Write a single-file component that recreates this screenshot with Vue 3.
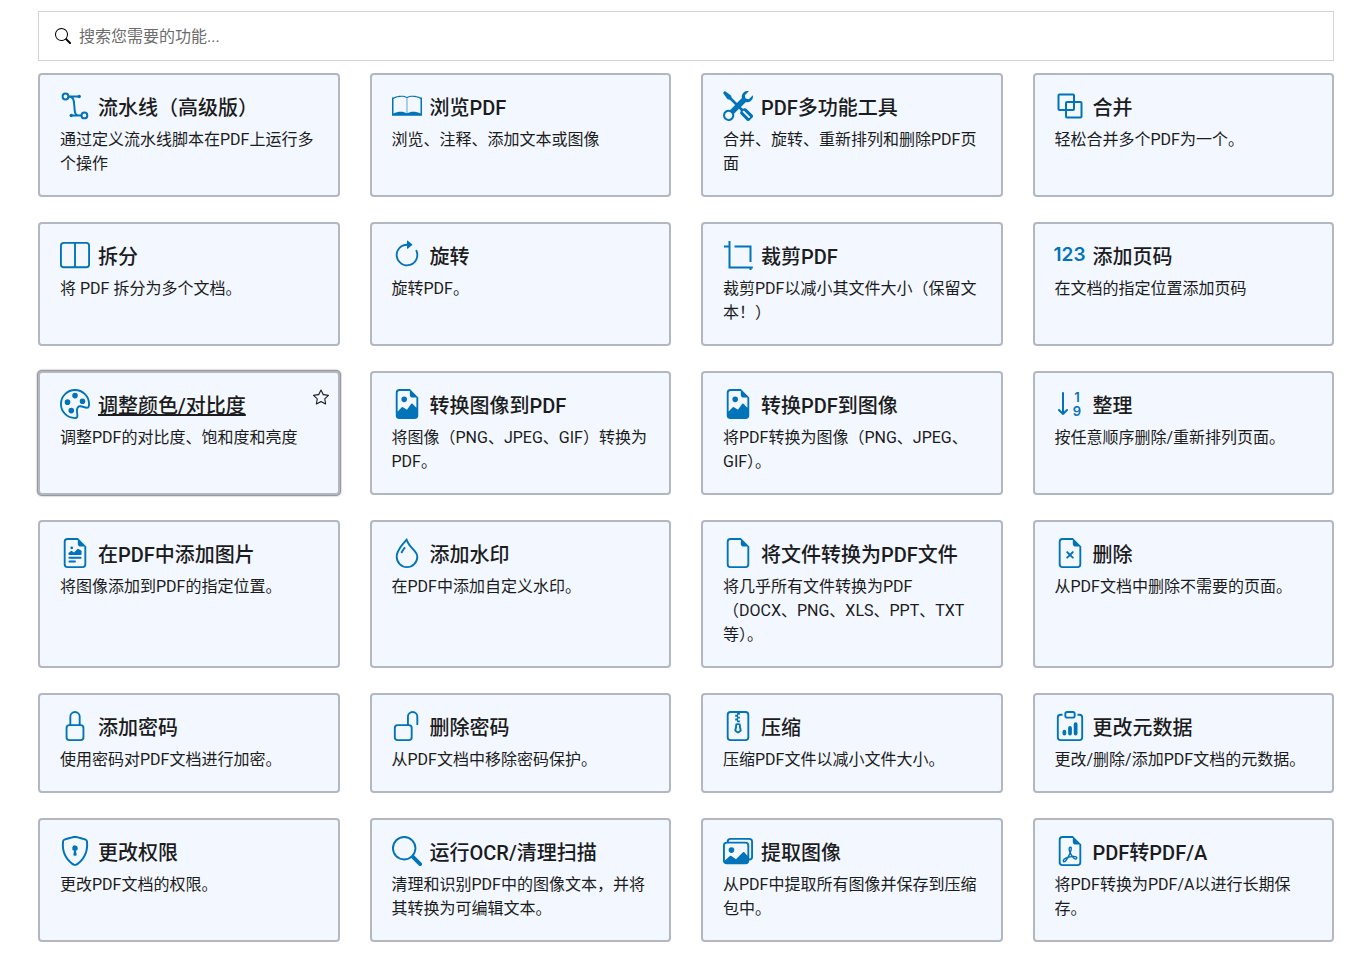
<script setup>
import { ref, computed } from 'vue'

const query = ref('')

const earmark = 'M14 4.5V14a2 2 0 0 1-2 2H4a2 2 0 0 1-2-2V2a2 2 0 0 1 2-2h5.5L14 4.5zm-3 0A1.5 1.5 0 0 1 9.5 3V1H4a1 1 0 0 0-1 1v12a1 1 0 0 0 1 1h8a1 1 0 0 0 1-1V4.5h-2z'
const searchPath = 'M11.742 10.344a6.5 6.5 0 1 0-1.397 1.398h-.001c.03.04.062.078.098.115l3.85 3.85a1 1 0 0 0 1.415-1.414l-3.85-3.85a1.007 1.007 0 0 0-.115-.1zM12 6.5a5.5 5.5 0 1 1-11 0 5.5 5.5 0 0 1 11 0z'
const starPath = 'M2.866 14.85c-.078.444.36.791.746.593l4.39-2.256 4.389 2.256c.386.198.824-.149.746-.592l-.83-4.73 3.522-3.356c.33-.314.16-.888-.282-.95l-4.898-.696L8.465.792a.513.513 0 0 0-.927 0L5.354 5.12l-4.898.696c-.441.062-.612.636-.283.95l3.523 3.356-.83 4.73zm4.905-2.767-3.686 1.894.694-3.957a.565.565 0 0 0-.163-.505L1.71 6.745l4.052-.576a.525.525 0 0 0 .393-.288L8 2.223l1.847 3.658a.525.525 0 0 0 .393.288l4.052.575-2.906 2.77a.565.565 0 0 0-.163.506l.694 3.957-3.686-1.894a.503.503 0 0 0-.461 0z'

const icons = {
  tools: ['M1 0 0 1l2.2 3.081a1 1 0 0 0 .815.419h.07a1 1 0 0 1 .708.293l2.675 2.675-2.617 2.654A3.003 3.003 0 0 0 0 13a3 3 0 1 0 5.878-.851l2.654-2.617.968.968-.305.914a1 1 0 0 0 .242 1.023l3.27 3.27a.997.997 0 0 0 1.414 0l1.586-1.586a.997.997 0 0 0 0-1.414l-3.27-3.27a1 1 0 0 0-1.023-.242L10.5 9.5l-.96-.96 2.68-2.643A3.005 3.005 0 0 0 16 3q0-.405-.102-.777l-2.14 2.141L12 4l-.364-1.757L13.777.102a3 3 0 0 0-3.675 3.68L7.462 6.46 4.793 3.793a1 1 0 0 1-.293-.707v-.071a1 1 0 0 0-.419-.814zm9.646 10.646a.5.5 0 0 1 .708 0l2.914 2.915a.5.5 0 0 1-.707.707l-2.915-2.914a.5.5 0 0 1 0-.708M3 11l.471.242.529.026.287.445.445.287.026.529L5 13l-.242.471-.026.529-.445.287-.287.445-.529.026L3 15l-.471-.242L2 14.732l-.287-.445L1.268 14l-.026-.529L1 13l.242-.471.026-.529.445-.287.287-.445.529-.026z'],
  split: ['M0 3a2 2 0 0 1 2-2h12a2 2 0 0 1 2 2v10a2 2 0 0 1-2 2H2a2 2 0 0 1-2-2V3zm8.5-1v12H14a1 1 0 0 0 1-1V3a1 1 0 0 0-1-1H8.5zm-1 0H2a1 1 0 0 0-1 1v10a1 1 0 0 0 1 1h5.5V2z'],
  rotate: ['M8 3a5 5 0 1 0 4.546 2.914.5.5 0 0 1 .908-.417A6 6 0 1 1 8 2v1z', 'M8 4.466V.534a.25.25 0 0 1 .41-.192l2.36 1.966c.12.1.12.284 0 .384L8.41 4.658A.25.25 0 0 1 8 4.466z'],
  palette: ['M8 5a1.5 1.5 0 1 0 0-3 1.5 1.5 0 0 0 0 3zm4 3a1.5 1.5 0 1 0 0-3 1.5 1.5 0 0 0 0 3zM5.5 7a1.5 1.5 0 1 1-3 0 1.5 1.5 0 0 1 3 0zm.5 6a1.5 1.5 0 1 0 0-3 1.5 1.5 0 0 0 0 3z', 'M16 8c0 3.15-1.866 2.585-3.567 2.07C11.42 9.763 10.465 9.473 10 10c-.603.683-.475 1.819-.351 2.92C9.826 14.495 9.996 16 8 16a8 8 0 1 1 8-8zm-8 7c.611 0 .654-.171.655-.176.078-.146.124-.464.07-1.119-.014-.168-.037-.37-.061-.591-.052-.464-.112-1.005-.118-1.462-.01-.707.083-1.61.704-2.314.369-.417.845-.578 1.272-.618.404-.038.812.026 1.16.104.343.077.702.186 1.025.284l.028.008c.346.105.658.199.953.266.653.148.904.083.991.024C14.717 9.38 15 9.161 15 8a7 7 0 1 0-7 7z'],
  image: ['M6.502 7a1.5 1.5 0 1 0 0-3 1.5 1.5 0 0 0 0 3z', 'M14 14a2 2 0 0 1-2 2H4a2 2 0 0 1-2-2V2a2 2 0 0 1 2-2h5.5L14 4.5V14zM4 1a1 1 0 0 0-1 1v10l2.224-2.224a.5.5 0 0 1 .61-.075L8 11l2.157-3.02a.5.5 0 0 1 .76-.063L13 10V4.5h-2A1.5 1.5 0 0 1 9.5 3V1H4z'],
  richtext: [earmark, 'M4.5 12.5A.5.5 0 0 1 5 12h3a.5.5 0 0 1 0 1H5a.5.5 0 0 1-.5-.5zm0-2A.5.5 0 0 1 5 10h6a.5.5 0 0 1 0 1H5a.5.5 0 0 1-.5-.5zm1.639-3.708 1.33.886 1.854-1.855a.25.25 0 0 1 .289-.047l1.888.974V8.5a.5.5 0 0 1-.5.5H5a.5.5 0 0 1-.5-.5V8s1.54-1.274 1.639-1.208zM6.25 6a.75.75 0 1 0 0-1.5.75.75 0 0 0 0 1.5z'],
  droplet: ['M7.21.8C7.69.295 8 0 8 0c.109.363.234.708.371 1.038.812 1.946 2.073 3.35 3.197 4.6C12.878 7.096 14 8.345 14 10a6 6 0 0 1-12 0C2 6.668 5.58 2.517 7.21.8zm.413 1.021A31.25 31.25 0 0 0 5.794 3.99c-.726.95-1.436 2.008-1.96 3.07C3.304 8.133 3 9.138 3 10a5 5 0 0 0 10 0c0-1.201-.796-2.157-2.181-3.7l-.03-.032C9.75 5.11 8.5 3.72 7.623 1.82z', 'M4.553 7.776c.82-1.641 1.717-2.753 2.093-3.13l.708.708c-.29.29-1.128 1.311-1.907 2.87l-.894-.448z'],
  file: [earmark],
  fileX: [earmark, 'M6.854 7.146a.5.5 0 1 0-.708.708L7.293 9l-1.147 1.146a.5.5 0 0 0 .708.708L8 9.707l1.146 1.147a.5.5 0 0 0 .708-.708L8.707 9l1.147-1.146a.5.5 0 0 0-.708-.708L8 8.293 6.854 7.146z'],
  lock: ['M8 1a2 2 0 0 1 2 2v4H6V3a2 2 0 0 1 2-2zm3 6V3a3 3 0 0 0-6 0v4a2 2 0 0 0-2 2v5a2 2 0 0 0 2 2h6a2 2 0 0 0 2-2V9a2 2 0 0 0-2-2zM5 8h6a1 1 0 0 1 1 1v5a1 1 0 0 1-1 1H5a1 1 0 0 1-1-1V9a1 1 0 0 1 1-1z'],
  unlock: ['M11 1a2 2 0 0 0-2 2v4a2 2 0 0 1 2 2v5a2 2 0 0 1-2 2H3a2 2 0 0 1-2-2V9a2 2 0 0 1 2-2h5V3a3 3 0 0 1 6 0v4a.5.5 0 0 1-1 0V3a2 2 0 0 0-2-2zM3 8a1 1 0 0 0-1 1v5a1 1 0 0 0 1 1h6a1 1 0 0 0 1-1V9a1 1 0 0 0-1-1H3z'],
  zip: ['M6.5 7.5a1 1 0 0 1 1-1h1a1 1 0 0 1 1 1v.938l.4 1.599a1 1 0 0 1-.416 1.074l-.93.62a1 1 0 0 1-1.109 0l-.93-.62a1 1 0 0 1-.415-1.074l.4-1.599V7.5zm2 0h-1v.938a1 1 0 0 1-.03.243l-.4 1.598.93.62.93-.62-.4-1.598a1 1 0 0 1-.03-.243V7.5z', 'M2 2a2 2 0 0 1 2-2h8a2 2 0 0 1 2 2v12a2 2 0 0 1-2 2H4a2 2 0 0 1-2-2V2zm5.5-1H4a1 1 0 0 0-1 1v12a1 1 0 0 0 1 1h8a1 1 0 0 0 1-1V2a1 1 0 0 0-1-1H9v1H8v1h1v1H8v1h1v1H7.5V5h-1V4h1V3h-1V2h1V1z'],
  clipboard: ['M4 11a1 1 0 1 1 2 0v1a1 1 0 1 1-2 0v-1zm6-4a1 1 0 1 1 2 0v5a1 1 0 1 1-2 0V7zM7 9a1 1 0 0 1 2 0v3a1 1 0 1 1-2 0V9z', 'M4 1.5H3a2 2 0 0 0-2 2V14a2 2 0 0 0 2 2h10a2 2 0 0 0 2-2V3.5a2 2 0 0 0-2-2h-1v1h1a1 1 0 0 1 1 1V14a1 1 0 0 1-1 1H3a1 1 0 0 1-1-1V3.5a1 1 0 0 1 1-1h1v-1z', 'M9.5 1a.5.5 0 0 1 .5.5v1a.5.5 0 0 1-.5.5h-3a.5.5 0 0 1-.5-.5v-1a.5.5 0 0 1 .5-.5h3zm-3-1A1.5 1.5 0 0 0 5 1.5v1A1.5 1.5 0 0 0 6.5 4h3A1.5 1.5 0 0 0 11 2.5v-1A1.5 1.5 0 0 0 9.5 0h-3z'],
  shield: ['M5.338 1.59a61.44 61.44 0 0 0-2.837.856.481.481 0 0 0-.328.39c-.554 4.157.726 7.19 2.253 9.188a10.725 10.725 0 0 0 2.287 2.233c.346.244.652.42.893.533.12.057.218.095.293.118a.55.55 0 0 0 .101.025.615.615 0 0 0 .1-.025c.076-.023.174-.061.294-.118.24-.113.547-.29.893-.533a10.726 10.726 0 0 0 2.287-2.233c1.527-1.997 2.807-5.031 2.253-9.188a.48.48 0 0 0-.328-.39c-.651-.213-1.75-.56-2.837-.855C9.552 1.29 8.531 1.067 8 1.067c-.53 0-1.552.223-2.662.524zM5.072.56C6.157.265 7.31 0 8 0s1.843.265 2.928.56c1.11.3 2.229.655 2.887.87a1.54 1.54 0 0 1 1.044 1.262c.596 4.477-.787 7.795-2.465 9.99a11.775 11.775 0 0 1-2.517 2.453 7.159 7.159 0 0 1-1.048.625c-.28.132-.581.24-.829.24s-.548-.108-.829-.24a7.158 7.158 0 0 1-1.048-.625 11.777 11.777 0 0 1-2.517-2.453C1.928 10.487.545 7.169 1.141 2.692A1.54 1.54 0 0 1 2.185 1.43 62.456 62.456 0 0 1 5.072.56z', 'M9.5 6.5a1.5 1.5 0 0 1-1 1.415l.385 1.99a.5.5 0 0 1-.491.595h-.788a.5.5 0 0 1-.49-.595l.384-1.99a1.5 1.5 0 1 1 2-1.415z'],
  search: [searchPath],
  images: ['M4.502 9a1.5 1.5 0 1 0 0-3 1.5 1.5 0 0 0 0 3z', 'M14.002 13a2 2 0 0 1-2 2h-10a2 2 0 0 1-2-2V5A2 2 0 0 1 2 3a2 2 0 0 1 2-2h10a2 2 0 0 1 2 2v8a2 2 0 0 1-1.998 2zM14 2H4a1 1 0 0 0-1 1h9.002a2 2 0 0 1 2 2v7A1 1 0 0 0 15 11V3a1 1 0 0 0-1-1zM2.002 4a1 1 0 0 0-1 1v8l2.646-2.354a.5.5 0 0 1 .63-.062l2.66 1.773 3.71-3.71a.5.5 0 0 1 .577-.094l1.777 1.947V5a1 1 0 0 0-1-1h-10z'],
  pdf: [earmark, 'M4.603 14.087a.81.81 0 0 1-.438-.42c-.195-.388-.13-.776.08-1.102.198-.307.526-.568.897-.787a7.68 7.68 0 0 1 1.482-.645 19.697 19.697 0 0 0 1.062-2.227 7.269 7.269 0 0 1-.43-1.295c-.086-.4-.119-.796-.046-1.136.075-.354.274-.672.65-.823.192-.077.4-.12.602-.077a.7.7 0 0 1 .477.365c.088.164.12.356.127.538.007.188-.012.396-.047.614-.084.51-.27 1.134-.52 1.794a10.954 10.954 0 0 0 .98 1.686 5.753 5.753 0 0 1 1.334.05c.364.066.734.195.96.465.12.144.193.32.2.518.007.192-.047.382-.138.563a1.04 1.04 0 0 1-.354.416.856.856 0 0 1-.51.138c-.331-.014-.654-.196-.933-.417a5.712 5.712 0 0 1-.911-.95 11.651 11.651 0 0 0-1.997.406 11.307 11.307 0 0 1-1.02 1.51c-.292.35-.609.656-.927.787a.793.793 0 0 1-.58.029zm1.379-1.901c-.166.076-.32.156-.459.238-.328.194-.541.383-.647.547-.094.145-.096.25-.04.361.01.022.02.036.026.044a.266.266 0 0 0 .035-.012c.137-.056.355-.235.635-.572a8.18 8.18 0 0 0 .45-.606zm1.64-1.33a12.71 12.71 0 0 1 1.01-.193 11.744 11.744 0 0 1-.51-.858 20.801 20.801 0 0 1-.5 1.05zm2.446.45c.15.163.296.3.435.41.24.19.407.253.498.256a.107.107 0 0 0 .07-.015.307.307 0 0 0 .094-.125.436.436 0 0 0 .059-.2.095.095 0 0 0-.026-.063c-.052-.062-.2-.152-.518-.209a3.876 3.876 0 0 0-.612-.053zM8.078 7.8a6.7 6.7 0 0 0 .2-.828c.031-.188.043-.343.038-.465a.613.613 0 0 0-.032-.198.517.517 0 0 0-.145.04c-.087.035-.158.106-.196.283-.04.192-.03.469.046.822.024.111.054.227.09.346z']
}

const tools = [
  { icon: 'pipeline', title: '流水线（高级版）', text: '通过定义流水线脚本在PDF上运行多个操作' },
  { icon: 'book', title: '浏览PDF', text: '浏览、注释、添加文本或图像' },
  { icon: 'tools', title: 'PDF多功能工具', text: '合并、旋转、重新排列和删除PDF页面' },
  { icon: 'merge', title: '合并', text: '轻松合并多个PDF为一个。' },
  { icon: 'split', title: '拆分', text: '将 PDF 拆分为多个文档。' },
  { icon: 'rotate', title: '旋转', text: '旋转PDF。' },
  { icon: 'crop', title: '裁剪PDF', text: '裁剪PDF以减小其文件大小（保留文本！）' },
  { icon: 'numbers', title: '添加页码', text: '在文档的指定位置添加页码' },
  { icon: 'palette', title: '调整颜色/对比度', text: '调整PDF的对比度、饱和度和亮度', active: true },
  { icon: 'image', title: '转换图像到PDF', text: '将图像（PNG、JPEG、GIF）转换为PDF。' },
  { icon: 'image', title: '转换PDF到图像', text: '将PDF转换为图像（PNG、JPEG、GIF）。' },
  { icon: 'sort', title: '整理', text: '按任意顺序删除/重新排列页面。' },
  { icon: 'richtext', title: '在PDF中添加图片', text: '将图像添加到PDF的指定位置。' },
  { icon: 'droplet', title: '添加水印', text: '在PDF中添加自定义水印。' },
  { icon: 'file', title: '将文件转换为PDF文件', text: '将几乎所有文件转换为PDF（DOCX、PNG、XLS、PPT、TXT等）。' },
  { icon: 'fileX', title: '删除', text: '从PDF文档中删除不需要的页面。' },
  { icon: 'lock', title: '添加密码', text: '使用密码对PDF文档进行加密。' },
  { icon: 'unlock', title: '删除密码', text: '从PDF文档中移除密码保护。' },
  { icon: 'zip', title: '压缩', text: '压缩PDF文件以减小文件大小。' },
  { icon: 'clipboard', title: '更改元数据', text: '更改/删除/添加PDF文档的元数据。' },
  { icon: 'shield', title: '更改权限', text: '更改PDF文档的权限。' },
  { icon: 'search', title: '运行OCR/清理扫描', text: '清理和识别PDF中的图像文本，并将其转换为可编辑文本。' },
  { icon: 'images', title: '提取图像', text: '从PDF中提取所有图像并保存到压缩包中。' },
  { icon: 'pdf', title: 'PDF转PDF/A', text: '将PDF转换为PDF/A以进行长期保存。' }
]

const shown = computed(() => tools.filter(t => (t.title + t.text).toLowerCase().includes(query.value.toLowerCase())))
</script>

<template>
  <main class="page">
    <label class="search">
      <svg class="search-icon" viewBox="0 0 16 16" aria-hidden="true"><path :d="searchPath" /></svg>
      <input v-model="query" class="search-input" type="text" placeholder="搜索您需要的功能..." aria-label="搜索您需要的功能" />
    </label>

    <section class="grid">
      <article v-for="tool in shown" :key="tool.title" class="card" :class="{ active: tool.active }">
        <a class="link" href="#">
          <span class="head">
            <span v-if="tool.icon === 'numbers'" class="icon digits" aria-hidden="true">123</span>
            <svg v-else-if="tool.icon === 'pipeline'" class="icon line" viewBox="0 0 30 30" aria-hidden="true">
              <circle cx="5.5" cy="5.5" r="2.9" />
              <circle cx="24.4" cy="24.4" r="2.9" />
              <path d="M8.5 5.5H19M11.5 24.5h10M8.5 5.5c5 .2 5.4 3.2 5.8 9.5s.8 9.3 3.7 9.5" />
              <circle class="dot" cx="19.2" cy="5.5" r="1.7" />
              <circle class="dot" cx="11.2" cy="24.5" r="1.7" />
            </svg>
            <svg v-else-if="tool.icon === 'book'" class="icon" viewBox="0 0 30 30" aria-hidden="true">
              <path fill-rule="evenodd" d="M0 6.500h1.500C5 4.500 12 4 15 6c3-2 10-1.500 13.500.5H30v18.300H0zM1.500 8v14.500c4-2.300 10-2.600 13.200-.2V7C11.500 5 5.500 5.500 1.500 8zM15.300 7v15.300c3.200-2.400 9.200-2.100 13.200.2V8C24.500 5.500 18.500 5 15.300 7z" />
            </svg>
            <svg v-else-if="tool.icon === 'merge'" class="icon line" viewBox="0 0 30 30" aria-hidden="true">
              <rect x="3.5" y="3.5" width="15.5" height="15.5" rx="1" />
              <rect x="11" y="11" width="15.5" height="15.5" rx="1" />
            </svg>
            <svg v-else-if="tool.icon === 'crop'" class="icon line" viewBox="0 0 30 30" aria-hidden="true">
              <path d="M1 6.500h5.500M6.500 1v26.500h23.300M11.500 6.500h16V22M27.500 27.500V30" />
            </svg>
            <span v-else-if="tool.icon === 'sort'" class="icon sort" aria-hidden="true">
              <svg class="arrow" viewBox="0 0 10 24" aria-hidden="true"><path d="M5 1v21M1 18l4 4 4-4" /></svg>
              <span class="stack"><span>1</span><span>9</span></span>
            </span>
            <svg v-else class="icon" viewBox="0 0 16 16" aria-hidden="true">
              <path v-for="d in icons[tool.icon]" :key="d" :d="d" />
            </svg>
            <span class="title">{{ tool.title }}</span>
          </span>
          <span class="text">{{ tool.text }}</span>
        </a>
        <button v-if="tool.active" class="star" type="button" aria-label="收藏">
          <svg viewBox="0 0 16 16" aria-hidden="true"><path :d="starPath" /></svg>
        </button>
      </article>
    </section>
  </main>
</template>

<style>
body {
  background: #fff;
}
</style>

<style scoped>
.page {
  box-sizing: border-box;
  padding: 11px 26px 12px 38px;
  color: #1b1c20;
  font-family: Roboto, "Noto Sans CJK SC", sans-serif;
  font-size: 16px;
  line-height: 24px;
}

.search {
  display: flex;
  align-items: center;
  gap: 8px;
  box-sizing: border-box;
  height: 50px;
  margin-bottom: 12px;
  padding: 0 16px;
  border: 1px solid #d3d3d5;
}

.search-icon {
  flex: none;
  width: 16px;
  height: 16px;
  fill: #000;
}

.search-input {
  flex: 1;
  min-width: 0;
  padding: 2px 0 0;
  border: 0;
  outline: 0;
  background: transparent;
  color: inherit;
  font: inherit;
}

.search-input::placeholder {
  color: #6c6c6e;
  opacity: 1;
}

.grid {
  display: grid;
  grid-template-columns: repeat(auto-fill, minmax(280px, 1fr));
  gap: 25px 30px;
}

.card {
  position: relative;
  border: 2px solid #b3b7c1;
  border-radius: 4px;
  background: #f3f7ff;
}

.card.active {
  box-shadow: 0 0 0 1px #999, 0 0 2px 1px #999;
}

.link {
  display: flex;
  flex-direction: column;
  gap: 7px;
  padding: 16px 20px 19px;
  color: inherit;
  text-decoration: none;
}

.head {
  display: flex;
  align-items: center;
  gap: 8px;
  height: 30px;
}

.icon {
  flex: none;
  width: 30px;
  height: 30px;
  fill: #0073b9;
  color: #0073b9;
}

.line {
  fill: none;
  stroke: #0073b9;
  stroke-width: 2;
}

.dot {
  fill: #0073b9;
  stroke: none;
}

.digits {
  display: flex;
  align-items: center;
  justify-content: center;
  font-family: Inter, sans-serif;
  font-size: 19px;
  font-weight: 600;
}

.sort {
  display: flex;
  align-items: center;
  justify-content: center;
  gap: 5px;
}

.arrow {
  width: 10px;
  height: 24px;
  fill: none;
  stroke: #0073b9;
  stroke-width: 2;
  stroke-linecap: round;
  stroke-linejoin: round;
}

.stack {
  display: flex;
  flex-direction: column;
  align-items: center;
  font-family: Inter, sans-serif;
  font-size: 13px;
  font-weight: 600;
  line-height: 14px;
}

.title {
  padding-top: 4px;
  font-size: 20px;
  font-weight: 500;
  line-height: 30px;
  white-space: nowrap;
}

.active .title {
  text-decoration: underline;
}

.star {
  position: absolute;
  top: 16px;
  right: 9px;
  width: 16px;
  height: 16px;
  padding: 0;
  border: 0;
  background: none;
  cursor: pointer;
}

.star svg {
  display: block;
  width: 16px;
  height: 16px;
  fill: #1b1c20;
}
</style>
